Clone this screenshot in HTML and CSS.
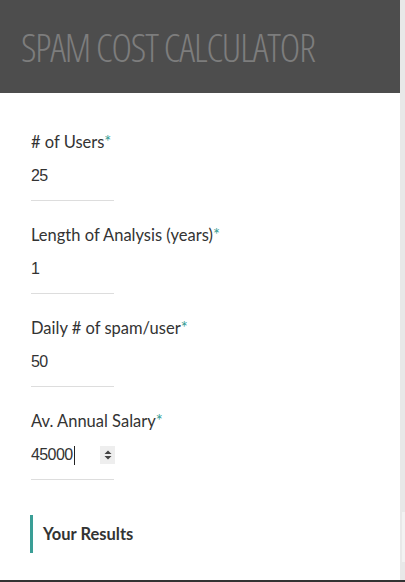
FILE: index.html
```html
<!DOCTYPE html>
<html lang="en">
<head>
<meta charset="utf-8">
<title>Spam Cost Calculator</title>
<link rel="stylesheet" href="styles.css">
</head>
<body>
<div class="frame">
  <div class="page">
    <header class="banner">
      <h1 class="title">SPAM COST CALCULATOR</h1>
    </header>
    <main class="form">
      <div class="group">
        <label class="label">#&nbsp;of Users<span class="req">*</span></label>
        <div class="field"><span class="value">25</span></div>
      </div>
      <div class="group">
        <label class="label">Length of Analysis (years)<span class="req">*</span></label>
        <div class="field"><span class="value">1</span></div>
      </div>
      <div class="group">
        <label class="label">Daily # of spam/user<span class="req">*</span></label>
        <div class="field"><span class="value">50</span></div>
      </div>
      <div class="group">
        <label class="label">Av. Annual Salary<span class="req">*</span></label>
        <div class="field field-number">
          <span class="value">45000</span><span class="caret"></span>
          <span class="spinner">
            <svg width="8" height="12" viewBox="0 0 8 12"><path d="M4 1.5 L7.5 5 H0.5 Z M4 10.5 L7.5 7 H0.5 Z" fill="#444"/></svg>
          </span>
        </div>
      </div>
      <h2 class="results">Your Results</h2>
    </main>
  </div>
  <div class="scrollbar"><div class="thumb"></div></div>
</div>
</body>
</html>
```
FILE: styles.css
```css
html, body {
  margin: 0;
  padding: 0;
  background: #ffffff;
}
body {
  width: 405px;
  height: 582px;
  overflow: hidden;
  font-family: "Source Sans Pro", Lato, "Open Sans", sans-serif;
  color: #333333;
}
.frame {
  display: flex;
  height: 580px;
  border-bottom: 2px solid #333333;
}
.page {
  width: 400px;
  display: flex;
  flex-direction: column;
}
.scrollbar {
  width: 5px;
  background: #e8e8e8;
  display: flex;
  flex-direction: column;
  justify-content: flex-end;
  padding-bottom: 18px;
}
.thumb {
  margin-left: 2px;
  width: 3px;
  height: 50px;
  background: #f2f2f2;
}
.banner {
  height: 93px;
  background: #4d4d4d;
  display: flex;
  align-items: center;
}
.title {
  margin: 0 0 0 21px;
  font-family: "Open Sans", sans-serif;
  font-weight: 300;
  font-stretch: 75%;
  font-size: 39px;
  line-height: 1;
  color: #7d7d7d;
  letter-spacing: -1.2px;
  padding-bottom: 1px;
}
.form {
  padding: 39px 0 0 31px;
  display: flex;
  flex-direction: column;
}
.group {
  display: flex;
  flex-direction: column;
  margin-bottom: 24px;
}
.label {
  font-size: 16.5px;
  line-height: 20px;
  color: #333333;
}
.req {
  color: #3a9e96;
}
.field {
  position: relative;
  width: 83px;
  height: 48px;
  border-bottom: 1px solid #dddddd;
  display: flex;
  align-items: center;
  font-family: "Liberation Sans", Arial, sans-serif;
  font-size: 16px;
  letter-spacing: -0.6px;
  color: #333333;
}
.caret {
  width: 1px;
  height: 19px;
  background: #222222;
  margin-left: 1px;
}
.spinner {
  position: absolute;
  left: 69px;
  top: 15px;
  width: 15px;
  height: 18px;
  background: #eeeeee;
  display: flex;
  align-items: center;
  justify-content: center;
}
.results {
  margin: 11px 0 0 -1px;
  border-left: 3px solid #3a9e96;
  padding: 9px 10px;
  font-size: 16.5px;
  line-height: 20px;
  font-weight: 700;
  color: #333333;
}
```
